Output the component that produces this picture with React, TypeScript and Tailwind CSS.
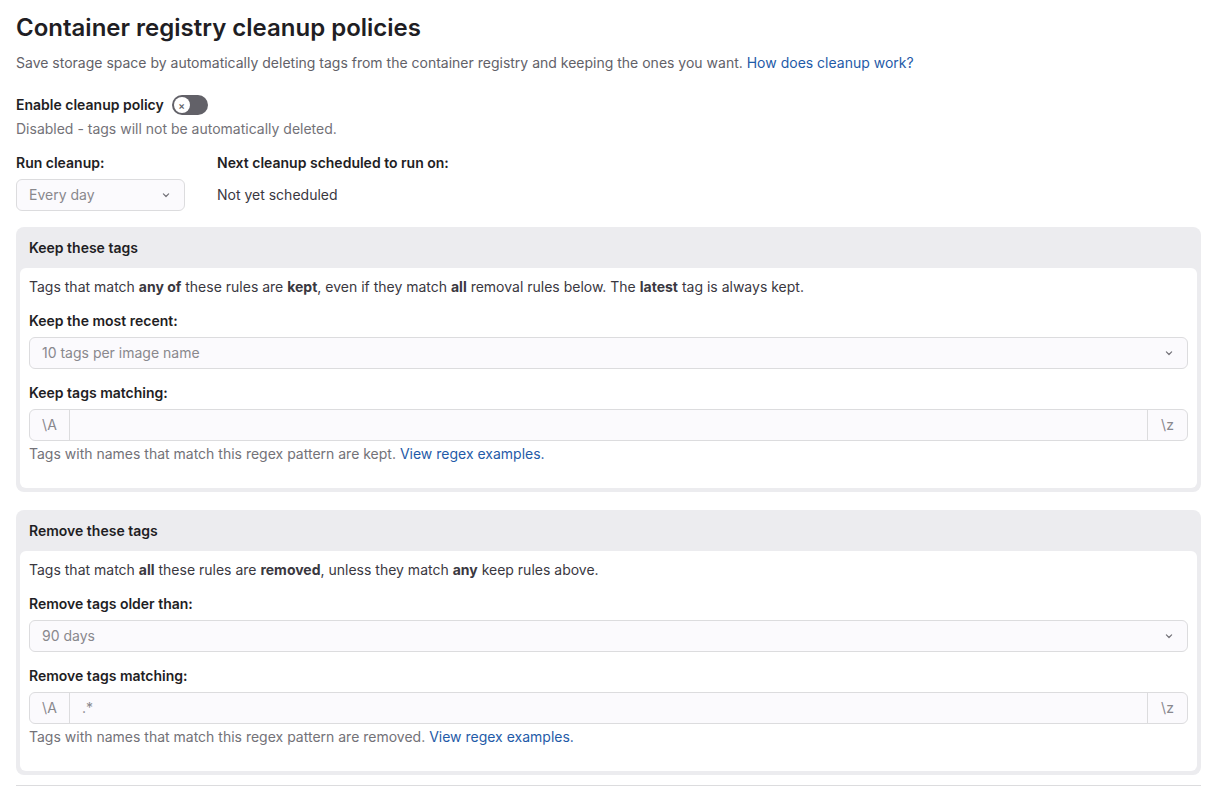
import React from "react";

function Chevron() {
  return (
    <svg width="12" height="12" viewBox="0 0 16 16" fill="none" stroke="#737278" strokeWidth="1.6" strokeLinecap="round" strokeLinejoin="round">
      <path d="M4.5 6.5 8 10l3.5-3.5" />
    </svg>
  );
}

function Select({ value, className }: { value: string; className?: string }) {
  return (
    <div className={`flex items-center justify-between h-8 px-3 rounded-md border border-[#dcdcde] bg-[#fbfafd] text-[#89888d] ${className ?? ""}`}>
      <span>{value}</span>
      <Chevron />
    </div>
  );
}

function Regex({ value }: { value: string }) {
  return (
    <div className="flex h-8 rounded-md border border-[#dcdcde] bg-[#fbfafd] text-[#89888d]">
      <div className="w-10 flex items-center justify-center border-r border-[#dcdcde]">\A</div>
      <div className="flex-1 flex items-center px-3">{value}</div>
      <div className="w-10 flex items-center justify-center border-l border-[#dcdcde]">\z</div>
    </div>
  );
}

function Card({ title, children }: { title: string; children: React.ReactNode }) {
  return (
    <div className="bg-[#ececef] rounded-lg px-1 pb-1">
      <div className="h-[41px] flex items-center px-[9px] font-semibold text-[#1f1e24]">{title}</div>
      <div className="bg-white rounded-md px-[9px] pt-[9px] pb-[24px]">{children}</div>
    </div>
  );
}

export default function App() {
  return (
    <div className="pl-4 pr-3 pt-3 text-sm text-[#3a383f] bg-white min-h-screen" style={{ fontFamily: "Inter, 'Liberation Sans', sans-serif" }}>
      <h1 className="text-[24px] font-semibold text-[#1f1e24] leading-8">Container registry cleanup policies</h1>
      <p className="mt-[9px] text-[#626168]">
        Save storage space by automatically deleting tags from the container registry and keeping the ones you want.{" "}
        <span className="text-[#1f5ba8]">How does cleanup work?</span>
      </p>

      <div className="mt-[22px] flex items-center gap-2 font-semibold text-[#1f1e24]">
        Enable cleanup policy
        <div className="w-9 h-5 rounded-full bg-[#626168] p-[2px] flex">
          <div className="w-4 h-4 rounded-full bg-white flex items-center justify-center text-[10px] text-[#626168] leading-none">×</div>
        </div>
      </div>
      <p className="mt-[4px] text-[#737278]">Disabled - tags will not be automatically deleted.</p>

      <div className="mt-[14px] flex gap-8">
        <div className="w-[169px]">
          <div className="font-semibold text-[#1f1e24]">Run cleanup:</div>
          <Select value="Every day" className="mt-1.5 bg-[#f7f7f9]" />
        </div>
        <div>
          <div className="font-semibold text-[#1f1e24]">Next cleanup scheduled to run on:</div>
          <div className="mt-1.5 h-8 flex items-center text-[#3a383f]">Not yet scheduled</div>
        </div>
      </div>

      <div className="mt-[16px] flex flex-col gap-[18px]">
        <Card title="Keep these tags">
          <p>
            Tags that match <b>any of</b> these rules are <b>kept</b>, even if they match <b>all</b> removal rules below. The <b>latest</b> tag is always kept.
          </p>
          <div className="mt-[14px] font-semibold text-[#1f1e24]">Keep the most recent:</div>
          <Select value="10 tags per image name" className="mt-1.5" />
          <div className="mt-[14px] font-semibold text-[#1f1e24]">Keep tags matching:</div>
          <div className="mt-1.5"><Regex value="" /></div>
          <p className="mt-[3px] text-[#737278]">
            Tags with names that match this regex pattern are kept. <span className="text-[#1f5ba8]">View regex examples.</span>
          </p>
        </Card>
        <Card title="Remove these tags">
          <p>
            Tags that match <b>all</b> these rules are <b>removed</b>, unless they match <b>any</b> keep rules above.
          </p>
          <div className="mt-[14px] font-semibold text-[#1f1e24]">Remove tags older than:</div>
          <Select value="90 days" className="mt-1.5" />
          <div className="mt-[14px] font-semibold text-[#1f1e24]">Remove tags matching:</div>
          <div className="mt-1.5"><Regex value=".*" /></div>
          <p className="mt-[3px] text-[#737278]">
            Tags with names that match this regex pattern are removed. <span className="text-[#1f5ba8]">View regex examples.</span>
          </p>
        </Card>
      </div>

      <div className="mt-[10px] border-t border-[#dcdcde] pt-2 flex gap-4 pb-4">
        <button className="h-8 w-[115px] rounded-md border border-[#bfbfc3] bg-white" />
        <button className="h-8 w-[69px] rounded-md border border-[#bfbfc3] bg-white" />
      </div>
    </div>
  );
}
